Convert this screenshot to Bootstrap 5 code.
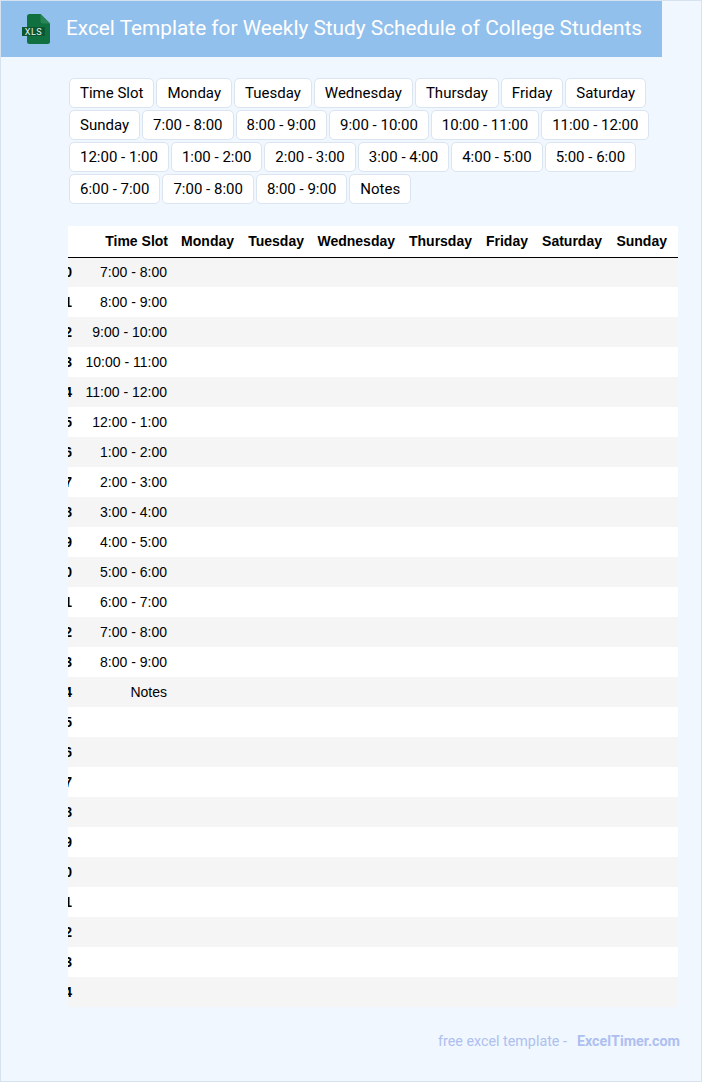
<!DOCTYPE html>
<html lang="en">
<head>
<meta charset="utf-8">
<title>Excel Template for Weekly Study Schedule of College Students</title>
<link href="https://cdn.jsdelivr.net/npm/bootstrap@5.3.0/dist/css/bootstrap.min.css" rel="stylesheet">
<style>
html,body{height:100%;}
body{background:#f0f7ff;font-family:Roboto,sans-serif;color:#000;}
.page-frame{width:702px;height:1082px;border:1px solid #d6e2f0;background:#f0f7ff;overflow:hidden;}
.title-bar{width:661px;height:56px;background:#92c0ec;padding-left:21px;}
.title-bar h1{font-size:20.8px;font-weight:400;color:#fff;margin:-3px 0 0 14px;line-height:56px;white-space:nowrap;}
.chip-wrap{padding:21px 0 0 68px;width:660px;gap:2px;}
.chip{--bs-btn-padding-x:10px;--bs-btn-padding-y:0;--bs-btn-font-size:15px;--bs-btn-color:#000;--bs-btn-bg:#fff;--bs-btn-border-color:#dbe5f1;--bs-btn-border-radius:5px;--bs-btn-line-height:28px;--bs-btn-hover-color:#000;--bs-btn-hover-bg:#fff;--bs-btn-hover-border-color:#dbe5f1;height:30px;font-family:Roboto,sans-serif;}
.sheet-clip{margin:22px 0 0 67px;width:610px;overflow:hidden;background:#fff;}
.sheet{margin:0 0 0 -24px;width:634px;table-layout:fixed;font-family:"Liberation Sans",sans-serif;font-size:14px;--bs-table-striped-bg:#f5f5f5;--bs-table-color:#000;--bs-table-striped-color:#000;--bs-table-bg:#fff;border-collapse:collapse;}
.sheet th,.sheet td{height:30px;padding:0 7px 0 0;text-align:right;vertical-align:middle;border:0;white-space:nowrap;line-height:16px;}
.sheet thead th{height:31px;border-bottom:1px solid #000;}
.sheet tbody th{font-weight:700;padding-right:5px;}
.sheet .idx{width:33px;}
.sheet .c-time{width:102px;padding-right:11px;}
.sheet td.c-time{padding-right:12px;}
.sheet .c-mon{width:62px;}
.sheet .c-tue{width:70px;}
.sheet .c-wed{width:91px;}
.sheet .c-thu{width:77px;}
.sheet .c-fri{width:56px;}
.sheet .c-sat{width:74px;}
.sheet .c-sun{width:69px;padding-right:11px;}
.foot-note{width:679px;padding-top:24px;font-size:14.3px;color:#aebff0;gap:10px;}
.foot-note a{font-weight:700;color:#aebff0;text-decoration:none;}
</style>
</head>
<body class="m-0">
<div class="page-frame">
  <header class="title-bar d-flex align-items-center">
    <svg width="30" height="30" viewBox="0 0 30 30" aria-hidden="true" class="flex-shrink-0">
      <path d="M5 2.500Q5 0 7.500 0H18.500L28 9.500V27.500Q28 30 25.500 30H7.500Q5 30 5 27.500Z" fill="#107040"/>
      <path d="M18.500 0L28 9.500H21Q18.500 9.500 18.500 7Z" fill="#2a8556"/>
      <rect x="0" y="13" width="23" height="9" fill="#0b5733"/>
      <text x="11.500" y="20.800" text-anchor="middle" font-family="Roboto,sans-serif" font-size="9" letter-spacing=".6" fill="#e8f3ec">XLS</text>
    </svg>
    <h1>Excel Template for Weekly Study Schedule of College Students</h1>
  </header>

  <div class="chip-wrap d-flex flex-wrap">
    <button type="button" class="btn chip">Time Slot</button>
    <button type="button" class="btn chip">Monday</button>
    <button type="button" class="btn chip">Tuesday</button>
    <button type="button" class="btn chip">Wednesday</button>
    <button type="button" class="btn chip">Thursday</button>
    <button type="button" class="btn chip">Friday</button>
    <button type="button" class="btn chip">Saturday</button>
    <button type="button" class="btn chip">Sunday</button>
    <button type="button" class="btn chip">7:00 - 8:00</button>
    <button type="button" class="btn chip">8:00 - 9:00</button>
    <button type="button" class="btn chip">9:00 - 10:00</button>
    <button type="button" class="btn chip">10:00 - 11:00</button>
    <button type="button" class="btn chip">11:00 - 12:00</button>
    <button type="button" class="btn chip">12:00 - 1:00</button>
    <button type="button" class="btn chip">1:00 - 2:00</button>
    <button type="button" class="btn chip">2:00 - 3:00</button>
    <button type="button" class="btn chip">3:00 - 4:00</button>
    <button type="button" class="btn chip">4:00 - 5:00</button>
    <button type="button" class="btn chip">5:00 - 6:00</button>
    <button type="button" class="btn chip">6:00 - 7:00</button>
    <button type="button" class="btn chip">7:00 - 8:00</button>
    <button type="button" class="btn chip">8:00 - 9:00</button>
    <button type="button" class="btn chip">Notes</button>
  </div>

  <div class="sheet-clip">
    <table class="table table-striped sheet mb-0">
      <thead>
        <tr><th class="idx"></th><th class="c-time">Time Slot</th><th class="c-mon">Monday</th><th class="c-tue">Tuesday</th><th class="c-wed">Wednesday</th><th class="c-thu">Thursday</th><th class="c-fri">Friday</th><th class="c-sat">Saturday</th><th class="c-sun">Sunday</th></tr>
      </thead>
      <tbody id="rows"></tbody>
    </table>
  </div>

  <footer class="foot-note d-flex justify-content-end">
    <span>free excel template -</span><a href="#">ExcelTimer.com</a>
  </footer>
</div>
<script src="https://cdn.jsdelivr.net/npm/bootstrap@5.3.0/dist/js/bootstrap.bundle.min.js"></script>
<script>
const slots=["7:00 - 8:00","8:00 - 9:00","9:00 - 10:00","10:00 - 11:00","11:00 - 12:00","12:00 - 1:00","1:00 - 2:00","2:00 - 3:00","3:00 - 4:00","4:00 - 5:00","5:00 - 6:00","6:00 - 7:00","7:00 - 8:00","8:00 - 9:00","Notes"];
let html="";
for(let i=0;i<25;i++){
  html+=`<tr><th class="idx">${i}</th><td class="c-time">${slots[i]||""}</td>`+"<td></td>".repeat(7)+"</tr>";
}
document.getElementById("rows").innerHTML=html;
</script>
</body>
</html>
